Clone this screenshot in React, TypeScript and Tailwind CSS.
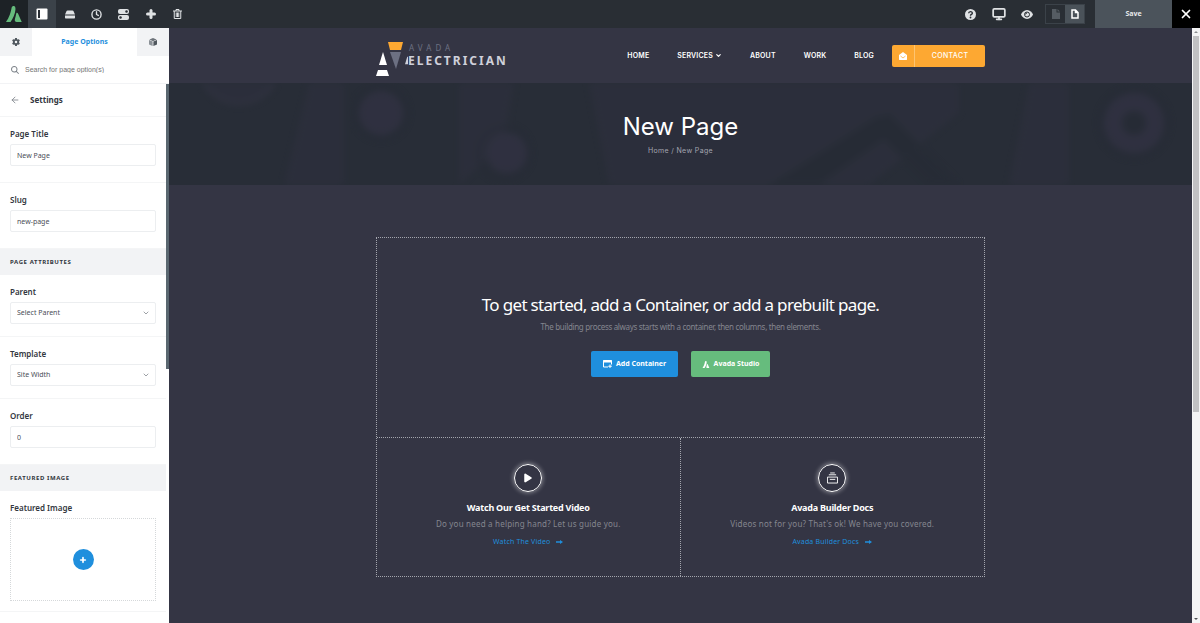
import type { ReactNode } from "react";
import { FaGear, FaMagnifyingGlass, FaPlay } from "react-icons/fa6";
import { ArrowLeft, ChevronDown, Clock, Monitor, Plus, X } from "lucide-react";

function AvadaMark({ className }: { className?: string }) {
  return (
    <svg viewBox="0 0 30 30" className={className} fill="currentColor" aria-hidden="true">
      <path d="M14.5 0c2.6 0 3.6 3 3.2 7.2C17 15 13 24.500 8.500 30H0C5.500 23 9.500 11 10.500 3.500 11 1 12.500 0 14.500 0z" />
      <path d="M19.500 13c1.400-.6 2.500.2 3.400 2.200L29.500 30H20c-2.600 0-4-1.500-3.400-4.500.5-3 2-8 2.900-12.500z" />
    </svg>
  );
}

function LongArrow() {
  return (
    <svg viewBox="0 0 14 8" className="h-1 w-[7px]" fill="currentColor" aria-hidden="true">
      <path d="M0 2.500h8V0l6 4-6 4V5.500H0z" />
    </svg>
  );
}

function ToolButton({ label, children }: { label: string; children: ReactNode }) {
  return (
    <button type="button" aria-label={label} className="flex h-7 w-[27px] items-center justify-center text-[#dfe2e4]">
      {children}
    </button>
  );
}

function Toolbar() {
  return (
    <header className="flex h-7 shrink-0 items-stretch justify-between bg-[#292e34]">
      <div className="flex">
        <button type="button" aria-label="Avada" className="flex w-7 items-center justify-center bg-[#1d2226] text-[#66bc7d]">
          <AvadaMark className="h-4 w-4" />
        </button>
        <button type="button" aria-label="Toggle sidebar" className="flex w-7 items-center justify-center bg-[#3b4249]">
          <svg viewBox="0 0 12 12" className="h-3 w-3" aria-hidden="true">
            <rect x="0.500" y="0.500" width="11" height="11" rx="1" fill="#fff" />
            <rect x="2" y="2" width="2" height="8" fill="#292e34" />
          </svg>
        </button>
        <ToolButton label="Library">
          <svg viewBox="0 0 20 18" className="h-[9px] w-[10px]" fill="currentColor" aria-hidden="true">
            <path d="M5 1h10c1 0 1.500.4 1.900 1.200L20 9H0l3.100-6.800C3.500 1.400 4 1 5 1z" />
            <path d="M0 11h20v4c0 1.200-.8 2-2 2H2c-1.200 0-2-.8-2-2z" />
          </svg>
        </ToolButton>
        <ToolButton label="History">
          <Clock className="h-[11px] w-[11px]" strokeWidth={3} />
        </ToolButton>
        <ToolButton label="Preferences">
          <svg viewBox="0 0 22 22" className="h-[11px] w-[11px]" aria-hidden="true">
            <rect width="22" height="10" rx="4" fill="currentColor" />
            <rect y="12" width="22" height="10" rx="4" fill="currentColor" />
            <circle cx="17" cy="5" r="2.500" fill="#292e34" />
            <circle cx="5" cy="17" r="2.500" fill="#292e34" />
          </svg>
        </ToolButton>
        <ToolButton label="Add new">
          <Plus className="h-3 w-3" strokeWidth={6} />
        </ToolButton>
        <ToolButton label="Clear layout">
          <svg viewBox="0 0 18 20" className="h-[10px] w-[9px]" fill="none" stroke="currentColor" strokeWidth="2" aria-hidden="true">
            <path d="M0 4h18M6 4V1h6v3M2.500 4v15h13V4M6.500 7v9M9 7v9M11.500 7v9" />
          </svg>
        </ToolButton>
      </div>
      <div className="flex">
        <div className="flex gap-px">
          <ToolButton label="Help">
            <svg viewBox="0 0 24 24" className="h-[11px] w-[11px]" aria-hidden="true">
              <circle cx="12" cy="12" r="12" fill="currentColor" />
              <path d="M8 9.500c0-5 8-5 8-.5 0 3-4 2.500-4 5.500" fill="none" stroke="#292e34" strokeWidth="3" />
              <circle cx="12" cy="18.500" r="2" fill="#292e34" />
            </svg>
          </ToolButton>
          <ToolButton label="Responsive">
            <Monitor className="h-[14px] w-[14px]" strokeWidth={3} />
          </ToolButton>
          <ToolButton label="Preview">
            <svg viewBox="0 0 24 18" className="h-[9px] w-3" aria-hidden="true">
              <path d="M12 0c6 0 10 4.500 12 9-2 4.500-6 9-12 9S2 13.500 0 9c2-4.500 6-9 12-9z" fill="currentColor" />
              <circle cx="12" cy="9" r="5" fill="none" stroke="#292e34" strokeWidth="2" />
              <path d="M9 9a3 3 0 0 1 3-3" fill="none" stroke="#292e34" strokeWidth="2" />
            </svg>
          </ToolButton>
        </div>
        <div className="my-1 mr-2.5 ml-[5px] flex w-10 border border-[#3b4249]">
          <button type="button" aria-label="Draft" className="flex flex-1 items-center justify-center text-[#555c63]">
            <svg viewBox="0 0 16 20" className="h-[10px] w-2" fill="currentColor" aria-hidden="true">
              <path d="M0 0h9v7h7v13H0zM11 0l5 5h-5z" />
            </svg>
          </button>
          <button type="button" aria-label="Published" className="flex flex-1 items-center justify-center bg-[#4a5259] text-white">
            <svg viewBox="0 0 16 20" className="h-[10px] w-2" fill="none" stroke="currentColor" strokeWidth="3" aria-hidden="true">
              <path d="M2 2h7l5 5v11H2zM9 2v5h5" />
            </svg>
          </button>
        </div>
        <button type="button" className="w-[77px] bg-[#4b535b] text-[7px] font-bold text-[#e6e8ea]">
          Save
        </button>
        <button type="button" aria-label="Close" className="flex w-7 items-center justify-center bg-black text-white">
          <X className="h-[14px] w-[14px]" strokeWidth={3} />
        </button>
      </div>
    </header>
  );
}

function TextField({ id, label, value }: { id: string; label: string; value: string }) {
  return (
    <div className="flex flex-col gap-0.5 border-b border-[#f4f5f6] px-2.5 pt-[9px] pb-4">
      <label htmlFor={id} className="text-[8px] leading-4 font-semibold">
        {label}
      </label>
      <input
        id={id}
        defaultValue={value}
        className="h-[22px] w-full rounded-xs border border-[#eceef0] px-1.5 text-[7px] text-[#4a4e57]"
      />
    </div>
  );
}

function SelectField({ id, label, value }: { id: string; label: string; value: string }) {
  return (
    <div className="flex flex-col gap-0.5 border-b border-[#f4f5f6] px-2.5 pt-[9px] pb-3">
      <label htmlFor={id} className="text-[8px] leading-4 font-semibold">
        {label}
      </label>
      <div className="relative">
        <select
          id={id}
          className="block h-[22px] w-full appearance-none rounded-xs border border-[#eceef0] px-1.5 text-[7px] text-[#4a4e57]"
        >
          <option>{value}</option>
        </select>
        <ChevronDown className="pointer-events-none absolute top-[7px] right-1.5 h-2 w-2 text-[#6b7178]" />
      </div>
    </div>
  );
}

function SectionTitle({ children }: { children: ReactNode }) {
  return (
    <h3 className="flex h-[26px] items-center bg-[#f2f3f5] px-2.5 text-[6px] font-bold tracking-widest uppercase">
      {children}
    </h3>
  );
}

function Sidebar() {
  return (
    <aside className="flex w-[169px] shrink-0 flex-col overflow-hidden bg-white text-[#333740]">
      <div className="flex h-7 shrink-0">
        <button type="button" aria-label="Global options" className="flex w-8 items-center justify-center bg-[#f2f3f5] text-[#50575e]">
          <FaGear className="h-2 w-2" />
        </button>
        <button type="button" className="flex-1 text-[7px] font-bold text-[#1f8fdd]">
          Page Options
        </button>
        <button type="button" aria-label="Elements" className="flex w-8 items-center justify-center bg-[#f2f3f5] text-[#50575e]">
          <svg viewBox="0 0 20 20" className="h-2 w-2" aria-hidden="true">
            <path d="M0 5l9 4v11l-9-4z" fill="#8b9197" />
            <path d="M10 0l9 4-9 4-9-4z" fill="#6d737a" />
            <path d="M11 9l9-4v11l-9 4z" fill="currentColor" />
          </svg>
        </button>
      </div>
      <div className="flex h-7 shrink-0 items-center gap-1.5 border-b border-[#f2f3f5] pl-[11px]">
        <FaMagnifyingGlass className="h-2 w-2 shrink-0 text-[#7d838a]" />
        <input
          type="search"
          aria-label="Search for page option(s)"
          placeholder="Search for page option(s)"
          className="h-5 min-w-0 flex-1 font-['Liberation_Sans',sans-serif] text-[7px] placeholder:text-[#757575]"
        />
      </div>
      <div className="flex min-h-0 flex-1">
        <div className="min-w-0 flex-1 overflow-hidden">
          <div className="flex h-[33px] items-center gap-2.5 border-b border-[#f4f5f6] px-2.5">
            <button type="button" aria-label="Back">
              <ArrowLeft className="h-2.5 w-2.5 text-[#7d838a]" />
            </button>
            <h2 className="text-[8px] font-bold">Settings</h2>
          </div>
          <TextField id="page-title" label="Page Title" value="New Page" />
          <TextField id="slug" label="Slug" value="new-page" />
          <SectionTitle>Page Attributes</SectionTitle>
          <SelectField id="parent" label="Parent" value="Select Parent" />
          <SelectField id="template" label="Template" value="Site Width" />
          <TextField id="order" label="Order" value="0" />
          <SectionTitle>Featured Image</SectionTitle>
          <div className="flex flex-col gap-0.5 border-b border-[#f4f5f6] px-2.5 pt-[9px] pb-2.5">
            <h4 className="text-[8px] leading-4 font-semibold">Featured Image</h4>
            <div className="flex h-[83px] items-center justify-center border border-dotted border-[#d5d8da]">
              <button
                type="button"
                aria-label="Add featured image"
                className="flex h-[21px] w-[21px] items-center justify-center rounded-full bg-[#1f8fdd] text-white"
              >
                <Plus className="h-2 w-2" strokeWidth={5} />
              </button>
            </div>
          </div>
        </div>
        <div className="w-[3px] shrink-0">
          <div className="h-[285px] bg-[#5a6770]" />
        </div>
      </div>
    </aside>
  );
}

function SiteLogo() {
  return (
    <a href="#" className="mt-1.5 flex items-start" aria-label="Avada Electrician">
      <svg viewBox="0 0 27 36" className="h-9 w-[27px]" aria-hidden="true">
        <path d="M12 1h15l-2 8H14z" fill="#fda832" />
        <path d="M14 11h11l-5 17z" fill="#6c7082" />
        <path d="M7 11l4 13H3z" fill="#fff" />
        <path d="M2 29h9l2 6H0z" fill="#fff" />
      </svg>
      <span className="flex flex-col pt-px pl-0.5">
        <span className="pl-1 text-[8px] leading-[11px] tracking-[4px] text-[#6c7082]">AVADA</span>
        <span className="flex items-center text-[12px] leading-4 font-bold tracking-[2px] text-[#cfd0da]">
          <svg viewBox="0 0 4 10" className="h-[9px] w-[3px]" fill="currentColor" aria-hidden="true">
            <path d="M3 0h1v10H0z" />
          </svg>
          ELECTRICIAN
        </span>
      </span>
    </a>
  );
}

function SiteHeader() {
  return (
    <div className="mx-auto flex h-[55px] w-full max-w-[609px] items-center justify-between">
      <SiteLogo />
      <nav className="flex items-center gap-7 font-['Inter',sans-serif] text-[7px] leading-[22px] font-semibold tracking-wide text-white">
        <a href="#">HOME</a>
        <a href="#" className="flex items-center gap-0.5">
          SERVICES
          <ChevronDown className="h-[7px] w-[7px]" strokeWidth={4} />
        </a>
        <a href="#">ABOUT</a>
        <a href="#">WORK</a>
        <a href="#">BLOG</a>
        <a href="#" className="-ml-2.5 flex h-[22px] w-[93px] items-stretch rounded-xs bg-[#fda832] font-medium">
          <span className="flex w-[23px] items-center justify-center border-r border-[#fec470]">
            <svg viewBox="0 0 16 16" className="h-2 w-2" aria-hidden="true">
              <path d="M8 0l8 6v9c0 .6-.4 1-1 1H1c-.6 0-1-.4-1-1V6z" fill="currentColor" />
              <path d="M3 8l5 4 5-4" fill="none" stroke="#fda832" strokeWidth="1.500" />
            </svg>
          </span>
          <span className="flex flex-1 items-center justify-center tracking-wider">CONTACT</span>
        </a>
      </nav>
    </div>
  );
}

function TitleBar() {
  return (
    <section className="relative h-[102px] overflow-hidden bg-[#282d37]">
      <svg
        viewBox="0 0 1023 102"
        preserveAspectRatio="xMidYMid slice"
        className="absolute inset-0 h-full w-full opacity-60 blur-[3px]"
        aria-hidden="true"
      >
        <g fill="#2e303e">
          <circle cx="70" cy="-20" r="42" />
          <path d="M140 0h35v102h-60zM290 0h55l-10 60-45 42z" />
          <path d="M420 0h370v30L700 102H440z" />
          <path d="M860 0h40v102h-60z" />
        </g>
        <g fill="#343346">
          <circle cx="212" cy="30" r="22" />
          <circle cx="338" cy="70" r="20" />
          <circle cx="965" cy="40" r="30" />
        </g>
        <g fill="#262b35">
          <path d="M600 102l110-70 20 14-80 56zM720 30l70 72h-30l-60-60z" />
          <circle cx="965" cy="40" r="12" />
        </g>
        <g fill="none" stroke="#242934" strokeWidth="4" strokeDasharray="3 3">
          <circle cx="212" cy="30" r="26" />
          <circle cx="335" cy="70" r="26" />
          <circle cx="965" cy="40" r="34" />
        </g>
        <circle cx="70" cy="-20" r="40" fill="none" stroke="#373747" strokeWidth="6" strokeDasharray="3 3" />
      </svg>
      <div className="relative flex flex-col items-center pt-7 font-['Inter',sans-serif]">
        <h1 className="text-[24px] leading-8 text-white">New Page</h1>
        <p className="text-[7px] leading-4 tracking-wider text-[#a3a5b0]">
          <a href="#">Home</a> / <span>New Page</span>
        </p>
      </div>
    </section>
  );
}

interface HelpCardProps {
  icon: ReactNode;
  title: string;
  text: string;
  link: string;
}

function HelpCard({ icon, title, text, link }: HelpCardProps) {
  return (
    <div className="flex h-[138px] flex-col items-center pt-[26px]">
      <div className="flex h-7 w-7 items-center justify-center rounded-full border border-white text-white shadow-[0_0_4px_1px_rgba(255,255,255,0.4)]">
        {icon}
      </div>
      <h3 className="mt-2 text-[9px] leading-4 font-bold tracking-tight text-white">{title}</h3>
      <p className="text-[8px] leading-4 tracking-wide text-[#84868f]">{text}</p>
      <a href="#" className="mt-0.5 flex items-center gap-1.5 text-[7px] leading-4 tracking-wide text-[#1f8fdd]">
        {link}
        <LongArrow />
      </a>
    </div>
  );
}

function GetStarted() {
  return (
    <section className="mx-auto mt-[52px] w-full max-w-[609px] border border-dotted border-[#a3a5ae]">
      <div className="flex h-[200px] flex-col items-center border-b border-dotted border-[#a3a5ae] pt-[55px]">
        <h2 className="text-[17px] leading-6 tracking-[-0.04em] text-white">
          To get started, add a Container, or add a prebuilt page.
        </h2>
        <p className="mt-0.5 text-[8px] leading-4 tracking-[-0.04em] text-[#84868f]">
          The building process always starts with a container, then columns, then elements.
        </p>
        <div className="mt-4 flex gap-[13px] text-[7px] font-bold text-white">
          <button type="button" className="flex h-[26px] w-[87px] items-center justify-center gap-1 rounded-xs bg-[#1f8fdd]">
            <svg viewBox="0 0 18 16" className="h-2 w-[9px]" aria-hidden="true">
              <path d="M1 1h16v8M1 1v13h9" fill="none" stroke="currentColor" strokeWidth="2" />
              <path d="M1 0h16v5H1z" fill="currentColor" />
              <path d="M14 9v7M10.500 12.500h7" stroke="currentColor" strokeWidth="2" />
            </svg>
            Add Container
          </button>
          <button type="button" className="flex h-[26px] w-[79px] items-center justify-center gap-1 rounded-xs bg-[#66bc7d]">
            <AvadaMark className="h-[7px] w-2" />
            Avada Studio
          </button>
        </div>
      </div>
      <div className="grid grid-cols-2 divide-x divide-dotted divide-[#a3a5ae]">
        <HelpCard
          icon={<FaPlay className="h-[10px] w-[8px]" />}
          title="Watch Our Get Started Video"
          text="Do you need a helping hand? Let us guide you."
          link="Watch The Video"
        />
        <HelpCard
          icon={
            <svg viewBox="0 0 24 26" className="h-3 w-[11px]" fill="none" stroke="currentColor" strokeWidth="2" aria-hidden="true">
              <path d="M7 2h10M4 6h16M1 11h22v13H1zM6 16h12" />
            </svg>
          }
          title="Avada Builder Docs"
          text="Videos not for you? That's ok! We have you covered."
          link="Avada Builder Docs"
        />
      </div>
    </section>
  );
}

function PageScrollbar() {
  return (
    <div className="flex w-2 shrink-0 flex-col items-center justify-between bg-[#f4f4f5]">
      <div className="flex w-full flex-col items-center">
        <svg viewBox="0 0 8 8" className="h-2 w-2" fill="#8a8d90" aria-hidden="true">
          <path d="M4 3l2 2H2z" />
        </svg>
        <div className="h-[376px] w-1.5 bg-[#c1c1c3]" />
      </div>
      <svg viewBox="0 0 8 8" className="h-2 w-2" fill="#505356" aria-hidden="true">
        <path d="M4 5l2-2H2z" />
      </svg>
    </div>
  );
}

export default function App() {
  return (
    <div className="flex h-screen flex-col overflow-hidden bg-[#343544] font-['Noto_Sans',sans-serif]">
      <Toolbar />
      <div className="flex min-h-0 flex-1">
        <Sidebar />
        <main className="min-w-0 flex-1 overflow-hidden">
          <SiteHeader />
          <TitleBar />
          <GetStarted />
        </main>
        <PageScrollbar />
      </div>
    </div>
  );
}
